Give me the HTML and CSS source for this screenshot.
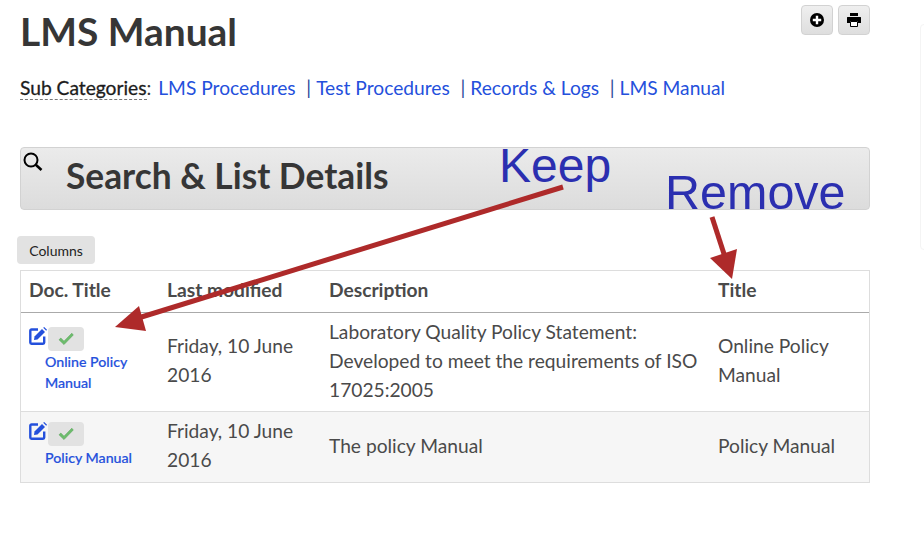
FILE: index.html
```html
<!DOCTYPE html>
<html lang="en">
<head>
<meta charset="utf-8">
<title>LMS Manual</title>
<link rel="stylesheet" href="styles.css">
</head>
<body>
<main class="page">
  <header class="head">
    <h1 class="title">LMS Manual</h1>
    <div class="tools">
      <button class="tool" type="button" aria-label="Add">
        <svg width="16" height="16" viewBox="0 0 16 16"><circle cx="8" cy="8" r="7" fill="#000"/><path d="M8 3.800v8.400M3.800 8h8.400" stroke="#fff" stroke-width="2.400"/></svg>
      </button>
      <button class="tool" type="button" aria-label="Print">
        <svg width="16" height="16" viewBox="0 0 16 16"><path d="M4 1h8v3H4z" fill="#000"/><path d="M1.500 5h13a.5.5 0 0 1 .5.500V11h-3V9H4v2H1V5.500a.5.5 0 0 1 .5-.5z" fill="#000"/><path d="M4.500 9.500h7v5h-7z" fill="#fff" stroke="#000"/></svg>
      </button>
    </div>
  </header>
  <p class="subs"><span class="subs-label">Sub Categories</span>: <a href="#">LMS Procedures</a><span class="sep">|</span><a href="#">Test Procedures</a><span class="sep">|</span><a href="#">Records &amp; Logs</a><span class="sep">|</span><a href="#">LMS Manual</a></p>
  <section class="search">
    <svg class="search-icon" width="22" height="22" viewBox="0 0 22 22"><circle cx="9" cy="9" r="6.500" fill="none" stroke="#000" stroke-width="2"/><path d="M13.800 13.800l5.700 5.200" stroke="#000" stroke-width="2.600"/></svg>
    <h2 class="search-title">Search &amp; List Details</h2>
  </section>
  <button class="columns" type="button">Columns</button>
  <table class="docs">
    <colgroup><col class="c1"><col class="c2"><col class="c3"><col class="c4"></colgroup>
    <thead>
      <tr><th>Doc. Title</th><th>Last modified</th><th>Description</th><th>Title</th></tr>
    </thead>
    <tbody>
      <tr class="row-one">
        <td class="doc">
          <div class="doc-actions">
            <svg class="edit" width="18" height="18" viewBox="0 0 18 18"><path d="M9 2.500H2.500A1.200 1.200 0 0 0 1.300 3.700v11.800a1.200 1.200 0 0 0 1.200 1.200H14a1.200 1.200 0 0 0 1.200-1.200V9.500" fill="none" stroke="#2450dc" stroke-width="2.400"/><path d="M5.500 9.500L13 2l3 3-7.500 7.500-3.500.5z" fill="#2450dc"/><path d="M14.200 .8l1-.8L18 2.800l-.8 1z" fill="#2450dc"/></svg>
            <span class="check"><svg width="16" height="14" viewBox="0 0 16 14"><path d="M1 7.800L2.800 6l3.200 3.200L13.800 1.200 15.300 3 6 12.600z" fill="#6cbc6c" stroke="#4f9f4f" stroke-width=".5"/></svg></span>
          </div>
          <a class="doc-link" href="#">Online Policy Manual</a>
        </td>
        <td>Friday, 10 June 2016</td>
        <td class="text">Laboratory Quality Policy Statement: Developed to meet the requirements of ISO 17025:2005</td>
        <td>Online Policy Manual</td>
      </tr>
      <tr class="row-two">
        <td class="doc">
          <div class="doc-actions">
            <svg class="edit" width="18" height="18" viewBox="0 0 18 18"><path d="M9 2.500H2.500A1.200 1.200 0 0 0 1.300 3.700v11.800a1.200 1.200 0 0 0 1.200 1.200H14a1.200 1.200 0 0 0 1.200-1.200V9.500" fill="none" stroke="#2450dc" stroke-width="2.400"/><path d="M5.500 9.500L13 2l3 3-7.500 7.500-3.500.5z" fill="#2450dc"/><path d="M14.200 .8l1-.8L18 2.800l-.8 1z" fill="#2450dc"/></svg>
            <span class="check"><svg width="16" height="14" viewBox="0 0 16 14"><path d="M1 7.800L2.800 6l3.200 3.200L13.800 1.200 15.300 3 6 12.600z" fill="#6cbc6c" stroke="#4f9f4f" stroke-width=".5"/></svg></span>
          </div>
          <a class="doc-link" href="#">Policy Manual</a>
        </td>
        <td>Friday, 10 June 2016</td>
        <td class="text">The policy Manual</td>
        <td class="text">Policy Manual</td>
      </tr>
    </tbody>
  </table>
</main>
<aside class="edge"></aside>
<svg class="arrows" width="924" height="548" viewBox="0 0 924 548">
  <path d="M563 187L135 319" stroke="#ae2a2a" stroke-width="5" fill="none"/>
  <path d="M115 327L139 306 146 331z" fill="#ae2a2a"/>
  <path d="M712 217L725 257" stroke="#ae2a2a" stroke-width="5" fill="none"/>
  <path d="M710 258L737 249 732 279z" fill="#ae2a2a"/>
</svg>
<span class="note note-keep">Keep</span>
<span class="note note-remove">Remove</span>
</body>
</html>
```
FILE: styles.css
```css
* { box-sizing: border-box; }
html, body { margin: 0; padding: 0; }
body {
  width: 924px;
  height: 548px;
  position: relative;
  overflow: hidden;
  background: #fff;
  font-family: Lato, "Open Sans", sans-serif;
  font-size: 19.200px;
  color: #4a4a4a;
}
.page { width: 870px; padding: 5px 0 0 20px; }
.head { display: flex; justify-content: space-between; align-items: flex-start; height: 48px; }
.title {
  margin: 5px 0 0;
  font-size: 38.900px;
  line-height: 42px;
  font-weight: 700;
  color: #363636;
}
.tools { display: flex; gap: 5px; }
.tool {
  display: flex;
  align-items: center;
  justify-content: center;
  width: 32px;
  height: 30px;
  padding: 0;
  background: linear-gradient(#efefef, #dedede);
  border: 1px solid #d2d2d2;
  border-radius: 4px;
}
.subs { margin: 22px 0 0; height: 26px; line-height: 26px; color: #363636; white-space: nowrap; }
.subs-label { color: #1c1c1c; border-bottom: 1px dashed #777; -webkit-text-stroke: 0.3px #1c1c1c; }
.subs a { color: #2450dc; text-decoration: none; }
.subs-label + a { margin-left: 2px; }
.sep { margin: 0 5px 0 10.700px; color: #2a4a9c; }
.search {
  display: flex;
  align-items: center;
  height: 63px;
  margin-top: 46px;
  padding: 0 0 5px 45px;
  position: relative;
  background: linear-gradient(#ebebeb, #dcdcdc);
  border: 1px solid #d2d2d2;
  border-radius: 4px;
}
.search-icon { position: absolute; left: 1px; top: 3px; }
.search-title { margin: 0; font-size: 35.300px; line-height: 40px; font-weight: 700; color: #363636; }
.columns {
  display: block;
  width: 78px;
  height: 28px;
  margin: 26px 0 6px -3px;
  padding: 0;
  font-family: inherit;
  font-size: 14px;
  color: #222;
  background: #e2e2e2;
  border: 0;
  border-radius: 4px;
}
.docs {
  width: 850px;
  table-layout: fixed;
  border-collapse: separate;
  border-spacing: 0;
  border: 1px solid #ddd;
  line-height: 28.800px;
}
.c1 { width: 137px; }
.c2 { width: 162px; }
.c3 { width: 389px; }
.c4 { width: 160px; }
.docs th {
  height: 42px;
  padding: 0 9px 3px;
  text-align: left;
  font-weight: 700;
  color: #4a4a4a;
  border-bottom: 1px solid #aaa;
}
.docs th:first-child { padding-left: 8px; }
.docs td { padding: 0 9px 3px; vertical-align: middle; border-bottom: 1px solid #ddd; }
.docs td.text { padding-bottom: 1px; }
.docs tr:last-child td { border-bottom: 0; }
.row-one { height: 99px; }
.row-two { height: 70px; background: #f6f6f6; }
.docs .doc { vertical-align: top; padding: 14px 0 0 8px; }
.docs .row-two .doc { padding-top: 10px; }
.doc-actions { display: flex; align-items: flex-start; gap: 1px; height: 24px; }
.row-two .doc-actions { height: 25px; }
.check {
  display: flex;
  align-items: center;
  justify-content: center;
  width: 36px;
  height: 24px;
  background: #e2e2e2;
  border-radius: 4px;
}
.doc-link {
  display: block;
  padding: 0 9px 0 16px;
  font-size: 14.200px;
  line-height: 21px;
  font-weight: 500;
  color: #2450dc;
  text-decoration: none;
  -webkit-text-stroke: 0.2px #2450dc;
}
.edge {
  position: absolute;
  left: 920px;
  top: 24px;
  width: 20px;
  height: 226px;
  border: 1px solid #f4f4f4;
  border-radius: 4px;
}
.arrows { position: absolute; left: 0; top: 0; pointer-events: none; }
.note {
  position: absolute;
  font-family: "Liberation Sans", Arial, sans-serif;
  color: #2b2fb0;
  line-height: 1;
  font-size: 48.500px;
}
.note-keep { left: 499px; top: 142px; font-size: 48px; }
.note-remove { left: 665px; top: 168px; }
```
